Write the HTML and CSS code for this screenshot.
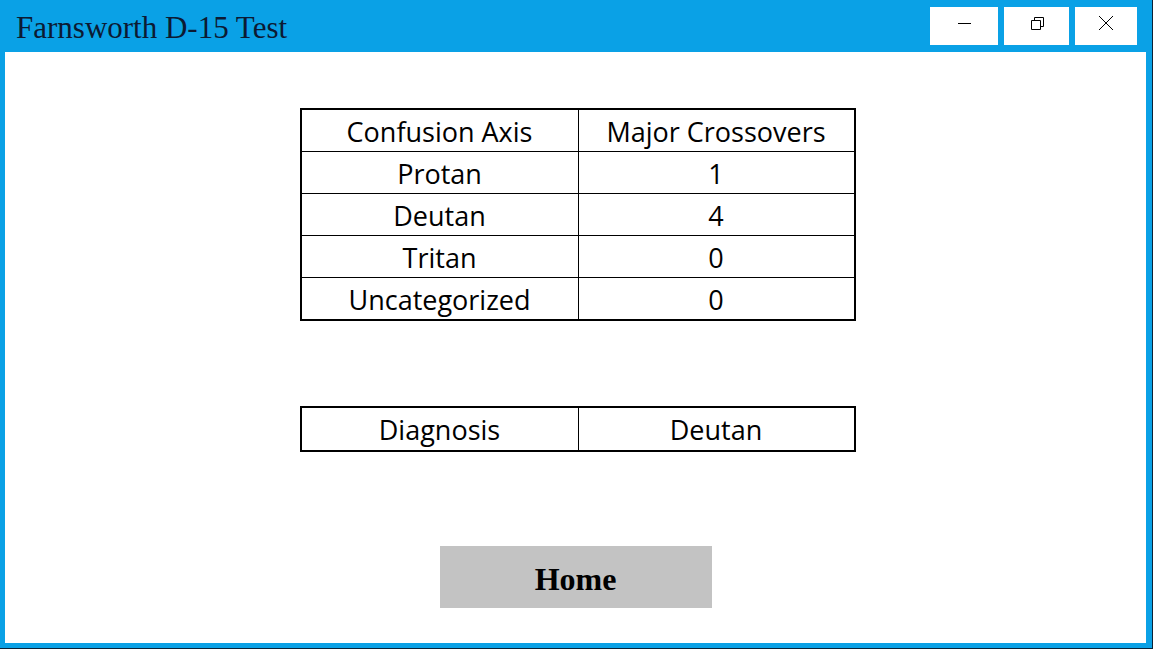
FILE: index.html
```html
<!DOCTYPE html>
<html>
<head>
<meta charset="utf-8">
<link rel="stylesheet" href="styles.css">
</head>
<body>
<div class="window">
  <div class="titlebar">
    <div class="title">Farnsworth D-15 Test</div>
    <div class="controls">
      <div class="ctl ctl-min">
        <svg width="16" height="16" viewBox="0 0 16 16"><path d="M2 8.5H15" stroke="#000" stroke-width="1" fill="none"/></svg>
      </div>
      <div class="ctl ctl-max">
        <svg width="16" height="16" viewBox="0 0 16 16"><path d="M2.5 5.5H11.5V14.5H2.5Z M5.5 5.5V2.5H14.5V11.5H11.5" stroke="#000" stroke-width="1" fill="none"/></svg>
      </div>
      <div class="ctl ctl-close">
        <svg width="18" height="18" viewBox="0 0 18 18"><path d="M2 2L16 16M16 2L2 16" stroke="#000" stroke-width="1" fill="none"/></svg>
      </div>
    </div>
  </div>
  <div class="content">
    <table class="grid results">
      <tr><td>Confusion Axis</td><td>Major Crossovers</td></tr>
      <tr><td>Protan</td><td>1</td></tr>
      <tr><td>Deutan</td><td>4</td></tr>
      <tr><td>Tritan</td><td>0</td></tr>
      <tr><td>Uncategorized</td><td>0</td></tr>
    </table>
    <table class="grid diagnosis">
      <tr><td>Diagnosis</td><td>Deutan</td></tr>
    </table>
    <button class="home">Home</button>
  </div>
</div>
</body>
</html>
```

FILE: styles.css
```css
html, body {
  margin: 0;
  padding: 0;
}
body {
  width: 1153px;
  height: 649px;
  overflow: hidden;
}
.window {
  box-sizing: border-box;
  width: 1153px;
  height: 649px;
  background: #0aa1e6;
  border-right: 1px solid #0a2236;
  border-bottom: 1px solid #0a2236;
  display: flex;
  flex-direction: column;
}
.titlebar {
  height: 52px;
  display: flex;
  justify-content: space-between;
  flex: none;
}
.title {
  font-family: "Liberation Serif", serif;
  font-size: 31px;
  color: #0c1a33;
  padding-left: 16px;
  padding-top: 11px;
  line-height: 34px;
}
.controls {
  display: flex;
  gap: 6px;
  padding-top: 7px;
  padding-right: 15px;
}
.ctl {
  height: 38px;
  background: #fff;
  display: flex;
  align-items: center;
  justify-content: center;
}
.ctl-min { width: 68px; }
.ctl-max { width: 65px; }
.ctl-close { width: 62px; }
.ctl svg { margin-top: -6px; }
.content {
  flex: 1;
  background: #fff;
  margin: 0 6px 5px 5px;
  display: flex;
  flex-direction: column;
  align-items: center;
}
.grid {
  border-collapse: collapse;
  border: 2px solid #000;
  font-family: "Open Sans", Lato, sans-serif;
  font-size: 27px;
  color: #000;
  margin-left: 4px;
}
.grid td {
  border: 1px solid #000;
  width: 275px;
  height: 39px;
  padding: 2px 0 0 0;
  text-align: center;
  vertical-align: middle;
  line-height: 30px;
}
.grid td:first-child {
  width: 276px;
}
.results {
  margin-top: 56px;
}
.diagnosis {
  margin-top: 85px;
}
.diagnosis td {
  height: 40px;
}
.home {
  margin-top: 94px;
  width: 272px;
  height: 62px;
  border: none;
  background: #c3c3c3;
  font-family: "Liberation Serif", serif;
  font-weight: bold;
  font-size: 32px;
  color: #000;
  padding: 4px 0 0 0;
  margin-left: 0;
}
```
